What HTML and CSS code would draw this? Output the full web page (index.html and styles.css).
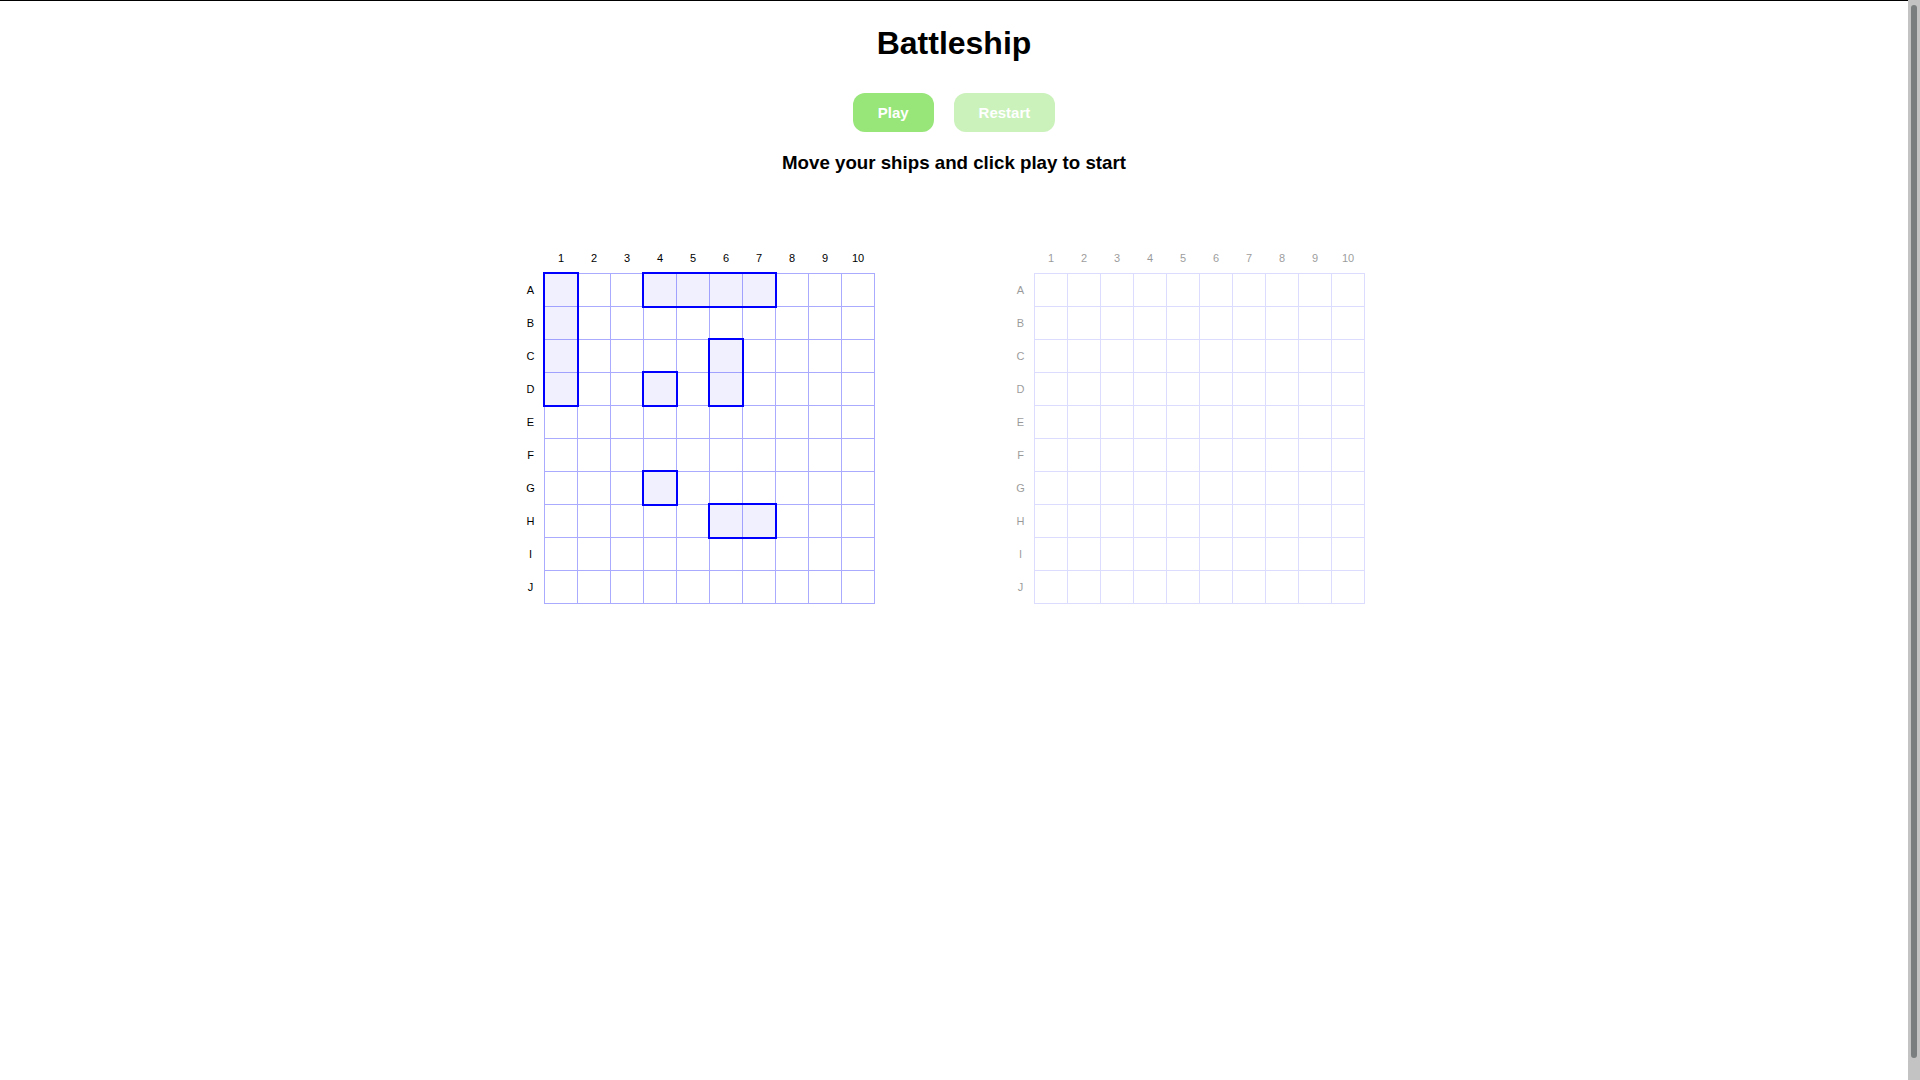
FILE: index.html
```html
<!DOCTYPE html>
<html lang="en">
<head>
<meta charset="utf-8">
<title>Battleship</title>
<link rel="stylesheet" href="styles.css">
</head>
<body>
<h1 class="title">Battleship</h1>
<div class="controls">
  <button class="btn btn-play">Play</button>
  <button class="btn btn-restart" disabled>Restart</button>
</div>
<h3 class="status">Move your ships and click play to start</h3>
<div class="boards">
  <div class="board board-player">
    <div class="col-labels"><span>1</span><span>2</span><span>3</span><span>4</span><span>5</span><span>6</span><span>7</span><span>8</span><span>9</span><span>10</span></div>
    <div class="row-labels"><span>A</span><span>B</span><span>C</span><span>D</span><span>E</span><span>F</span><span>G</span><span>H</span><span>I</span><span>J</span></div>
    <div class="field">
      <div class="c"></div><div class="c"></div><div class="c"></div><div class="c"></div><div class="c"></div><div class="c"></div><div class="c"></div><div class="c"></div><div class="c"></div><div class="c"></div>
      <div class="c"></div><div class="c"></div><div class="c"></div><div class="c"></div><div class="c"></div><div class="c"></div><div class="c"></div><div class="c"></div><div class="c"></div><div class="c"></div>
      <div class="c"></div><div class="c"></div><div class="c"></div><div class="c"></div><div class="c"></div><div class="c"></div><div class="c"></div><div class="c"></div><div class="c"></div><div class="c"></div>
      <div class="c"></div><div class="c"></div><div class="c"></div><div class="c"></div><div class="c"></div><div class="c"></div><div class="c"></div><div class="c"></div><div class="c"></div><div class="c"></div>
      <div class="c"></div><div class="c"></div><div class="c"></div><div class="c"></div><div class="c"></div><div class="c"></div><div class="c"></div><div class="c"></div><div class="c"></div><div class="c"></div>
      <div class="c"></div><div class="c"></div><div class="c"></div><div class="c"></div><div class="c"></div><div class="c"></div><div class="c"></div><div class="c"></div><div class="c"></div><div class="c"></div>
      <div class="c"></div><div class="c"></div><div class="c"></div><div class="c"></div><div class="c"></div><div class="c"></div><div class="c"></div><div class="c"></div><div class="c"></div><div class="c"></div>
      <div class="c"></div><div class="c"></div><div class="c"></div><div class="c"></div><div class="c"></div><div class="c"></div><div class="c"></div><div class="c"></div><div class="c"></div><div class="c"></div>
      <div class="c"></div><div class="c"></div><div class="c"></div><div class="c"></div><div class="c"></div><div class="c"></div><div class="c"></div><div class="c"></div><div class="c"></div><div class="c"></div>
      <div class="c"></div><div class="c"></div><div class="c"></div><div class="c"></div><div class="c"></div><div class="c"></div><div class="c"></div><div class="c"></div><div class="c"></div><div class="c"></div>
      <div class="ship" style="left:-2px;top:-2px;width:36px;height:135px"></div>
      <div class="ship" style="left:97px;top:-2px;width:135px;height:36px"></div>
      <div class="ship" style="left:163px;top:64px;width:36px;height:69px"></div>
      <div class="ship" style="left:97px;top:97px;width:36px;height:36px"></div>
      <div class="ship" style="left:97px;top:196px;width:36px;height:36px"></div>
      <div class="ship" style="left:163px;top:229px;width:69px;height:36px"></div>
    </div>
  </div>
  <div class="board board-enemy">
    <div class="col-labels"><span>1</span><span>2</span><span>3</span><span>4</span><span>5</span><span>6</span><span>7</span><span>8</span><span>9</span><span>10</span></div>
    <div class="row-labels"><span>A</span><span>B</span><span>C</span><span>D</span><span>E</span><span>F</span><span>G</span><span>H</span><span>I</span><span>J</span></div>
    <div class="field">
      <div class="c"></div><div class="c"></div><div class="c"></div><div class="c"></div><div class="c"></div><div class="c"></div><div class="c"></div><div class="c"></div><div class="c"></div><div class="c"></div>
      <div class="c"></div><div class="c"></div><div class="c"></div><div class="c"></div><div class="c"></div><div class="c"></div><div class="c"></div><div class="c"></div><div class="c"></div><div class="c"></div>
      <div class="c"></div><div class="c"></div><div class="c"></div><div class="c"></div><div class="c"></div><div class="c"></div><div class="c"></div><div class="c"></div><div class="c"></div><div class="c"></div>
      <div class="c"></div><div class="c"></div><div class="c"></div><div class="c"></div><div class="c"></div><div class="c"></div><div class="c"></div><div class="c"></div><div class="c"></div><div class="c"></div>
      <div class="c"></div><div class="c"></div><div class="c"></div><div class="c"></div><div class="c"></div><div class="c"></div><div class="c"></div><div class="c"></div><div class="c"></div><div class="c"></div>
      <div class="c"></div><div class="c"></div><div class="c"></div><div class="c"></div><div class="c"></div><div class="c"></div><div class="c"></div><div class="c"></div><div class="c"></div><div class="c"></div>
      <div class="c"></div><div class="c"></div><div class="c"></div><div class="c"></div><div class="c"></div><div class="c"></div><div class="c"></div><div class="c"></div><div class="c"></div><div class="c"></div>
      <div class="c"></div><div class="c"></div><div class="c"></div><div class="c"></div><div class="c"></div><div class="c"></div><div class="c"></div><div class="c"></div><div class="c"></div><div class="c"></div>
      <div class="c"></div><div class="c"></div><div class="c"></div><div class="c"></div><div class="c"></div><div class="c"></div><div class="c"></div><div class="c"></div><div class="c"></div><div class="c"></div>
      <div class="c"></div><div class="c"></div><div class="c"></div><div class="c"></div><div class="c"></div><div class="c"></div><div class="c"></div><div class="c"></div><div class="c"></div><div class="c"></div>
    </div>
  </div>
</div>
<div class="scrollbar" aria-hidden="true"><div class="scrollbar-thumb"></div></div>
</body>
</html>
```
FILE: styles.css
```css
html {
  border-top: 1px solid #000;
  padding-right: 12px;
}

body {
  margin: 0 8px 8px;
  min-height: 100vh;
  font-family: "Liberation Sans", Arial, sans-serif;
  color: #000;
  background: #fff;
}

.scrollbar {
  position: fixed;
  top: 0;
  right: 0;
  width: 12px;
  height: 100vh;
  background: #c3c3c3;
  box-sizing: border-box;
  padding: 5px 3px 22px;
}

.scrollbar-thumb {
  width: 6px;
  height: 100%;
  background: #7a7e7e;
  border-radius: 3px;
}

.title {
  font-size: 32px;
  font-weight: bold;
  line-height: normal;
  text-align: center;
  margin: 23.5px 0 0;
}

.controls {
  display: flex;
  justify-content: center;
  gap: 20px;
  margin-top: 31px;
}

.btn {
  font-family: "Liberation Sans", Arial, sans-serif;
  font-size: 15px;
  font-weight: bold;
  line-height: 17px;
  color: #fff;
  background: #98e67a;
  border: none;
  border-radius: 12px;
  padding: 11px 25px;
  cursor: pointer;
}

.btn-restart:disabled {
  opacity: 0.5;
  cursor: default;
}

.status {
  font-size: 18.72px;
  font-weight: bold;
  text-align: center;
  margin: 20px 0 0;
}

.boards {
  display: flex;
  justify-content: center;
  gap: 99px;
  margin-top: 69px;
}

.board {
  display: grid;
  grid-template-columns: 30px 331px 30px;
  grid-template-rows: 30px auto;
}

.board-enemy {
  opacity: 0.4;
}

.col-labels {
  grid-column: 2;
  grid-row: 1;
  display: grid;
  grid-template-columns: repeat(10, 33px);
  padding-left: 1px;
  font-size: 11px;
  line-height: 30px;
  text-align: center;
}

.row-labels {
  grid-column: 1;
  grid-row: 2;
  padding-top: 1px;
  padding-left: 4px;
  font-size: 11px;
  text-align: center;
}

.row-labels span {
  display: block;
  height: 33px;
  line-height: 33px;
}

.field {
  grid-column: 2;
  grid-row: 2;
  position: relative;
  display: grid;
  grid-template-columns: repeat(10, 33px);
  border-top: 1px solid #aaaaff;
  border-left: 1px solid #aaaaff;
}

.c {
  box-sizing: border-box;
  width: 33px;
  height: 33px;
  border-right: 1px solid #aaaaff;
  border-bottom: 1px solid #aaaaff;
}

.ship {
  position: absolute;
  box-sizing: border-box;
  border: 2px solid #0000ff;
  background: rgba(0, 0, 255, 0.06);
}
```
